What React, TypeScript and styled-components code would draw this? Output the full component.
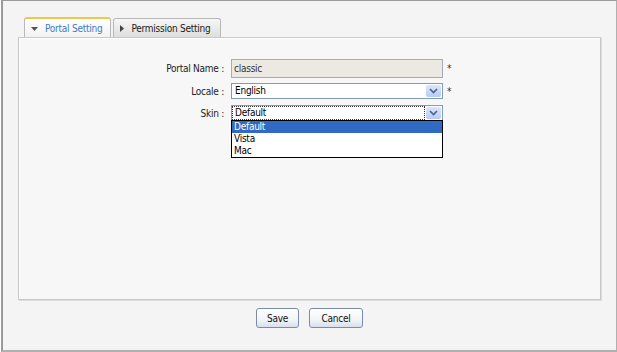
import React from "react";
import styled, { createGlobalStyle } from "styled-components";

const Global = createGlobalStyle`
  html, body { margin: 0; padding: 0; background: #fff; }
  body {
    font-family: "DejaVu Sans Condensed", "DejaVu Sans", sans-serif;
    font-size: 10px;
    letter-spacing: -0.25px;
    color: #000;
  }
`;

const Frame = styled.div`
  box-sizing: border-box;
  width: 616px;
  height: 352px;
  margin-left: 1px;
  border-top: 1px solid #9a9a9a;
  border-left: 2px solid #9a9a9a;
  border-right: 1px solid #b0b0b0;
  border-bottom: 2px solid #b0b0b0;
  background: #f4f4f4;
  padding: 16px 15px 0 15px;
  display: flex;
  flex-direction: column;
`;

const TabBar = styled.div`
  display: flex;
  align-items: flex-end;
  gap: 2px;
  padding-left: 6px;
  height: 20px;
`;

const Tab = styled.div<{ $active?: boolean }>`
  box-sizing: border-box;
  height: ${p => (p.$active ? 21 : 19)}px;
  padding: 0 ${p => (p.$active ? 8 : 10)}px 0 6px;
  display: flex;
  align-items: center;
  gap: 7px;
  border: 1px solid #b8b8b8;
  border-bottom: none;
  border-radius: 3px 3px 0 0;
  border-top: ${p => (p.$active ? "2px solid #f4c64a" : "1px solid #b8b8b8")};
  background: ${p => (p.$active ? "linear-gradient(#ffffff, #f2f2f2)" : "linear-gradient(#f7f7f7, #dedede)")};
  color: ${p => (p.$active ? "#3d7cc6" : "#222")};
  position: relative;
  top: ${p => (p.$active ? 1 : 0)}px;
`;

const Panel = styled.div`
  box-sizing: border-box;
  width: 583px;
  height: 263px;
  border: 1px solid #c8c8c8;
  box-shadow: inset 1px 1px 0 #fff, 1px 1px 0 #dcdcdc;
  background: #f7f7f7;
  position: relative;
  padding-top: 21px;
`;

const Row = styled.div<{ $gap?: number }>`
  display: grid;
  grid-template-columns: 205px 212px 12px;
  column-gap: 7px;
  align-items: center;
  margin-bottom: ${p => p.$gap ?? 0}px;
  position: relative;
`;

const Label = styled.div`
  text-align: right;
  color: #222;
`;

const TextInput = styled.div`
  box-sizing: border-box;
  height: 19px;
  border: 1px solid #a5acb5;
  background: #ebe9e1;
  padding: 3px 2px 0;
  color: #333;
`;

const Select = styled.div`
  box-sizing: border-box;
  height: 16px;
  border: 1px solid #7f9db9;
  background: #fff;
  display: flex;
  align-items: center;
  padding: 1px;
`;

const SelectText = styled.div<{ $focus?: boolean }>`
  flex: 1;
  height: 12px;
  line-height: 12px;
  padding-left: 2px;
  outline: ${p => (p.$focus ? "1px dotted #333" : "none")};
`;

const ArrowBtn = styled.div`
  width: 15px;
  height: 12px;
  margin-left: 2px;
  background: linear-gradient(#dbe6fb, #b7cbf5);
  border-radius: 2px;
  display: flex;
  align-items: center;
  justify-content: center;
`;

const Star = styled.div`
  color: #333;
  font-size: 10px;
  margin-left: -3px;
`;

const DropList = styled.div`
  position: absolute;
  left: 212px;
  top: 15px;
  width: 212px;
  box-sizing: border-box;
  border: 1px solid #000;
  background: #fff;
  z-index: 2;
`;

const Option = styled.div<{ $sel?: boolean }>`
  height: 12px;
  line-height: 12px;
  padding-left: 2px;
  background: ${p => (p.$sel ? "#316ac5" : "#fff")};
  color: ${p => (p.$sel ? "#fff" : "#000")};
`;

const Buttons = styled.div`
  display: flex;
  justify-content: center;
  gap: 10px;
  width: 583px;
  margin-top: 8px;
`;

const Button = styled.button<{ $w: number }>`
  box-sizing: border-box;
  width: ${p => p.$w}px;
  height: 20px;
  font: inherit;
  letter-spacing: inherit;
  color: #111;
  border: 1px solid #7b8ba8;
  border-radius: 3px;
  background: linear-gradient(#ffffff 0%, #f2f4f8 60%, #d9e0ec 100%);
  padding: 0;
`;

const Chevron = () => (
  <svg width="9" height="6" viewBox="0 0 9 6">
    <path d="M1 1 L4.5 4.5 L8 1" fill="none" stroke="#4d6185" strokeWidth="1.6" />
  </svg>
);

const DownTri = () => (
  <svg width="7" height="4" viewBox="0 0 7 4">
    <path d="M0 0 H7 L3.5 4 Z" fill="#555" />
  </svg>
);

const RightTri = () => (
  <svg width="4" height="7" viewBox="0 0 4 7">
    <path d="M0 0 V7 L4 3.5 Z" fill="#444" />
  </svg>
);

export default function App() {
  return (
    <>
      <Global />
      <Frame>
        <TabBar>
          <Tab $active>
            <DownTri />
            Portal Setting
          </Tab>
          <Tab>
            <RightTri />
            Permission Setting
          </Tab>
        </TabBar>
        <Panel>
          <Row $gap={5}>
            <Label>Portal Name :</Label>
            <TextInput>classic</TextInput>
            <Star>*</Star>
          </Row>
          <Row $gap={6}>
            <Label>Locale :</Label>
            <Select>
              <SelectText>English</SelectText>
              <ArrowBtn>
                <Chevron />
              </ArrowBtn>
            </Select>
            <Star>*</Star>
          </Row>
          <Row>
            <Label>Skin :</Label>
            <Select>
              <SelectText $focus>Default</SelectText>
              <ArrowBtn>
                <Chevron />
              </ArrowBtn>
            </Select>
            <div />
            <DropList>
              <Option $sel>Default</Option>
              <Option>Vista</Option>
              <Option>Mac</Option>
            </DropList>
          </Row>
        </Panel>
        <Buttons>
          <Button $w={43}>Save</Button>
          <Button $w={54}>Cancel</Button>
        </Buttons>
      </Frame>
    </>
  );
}
